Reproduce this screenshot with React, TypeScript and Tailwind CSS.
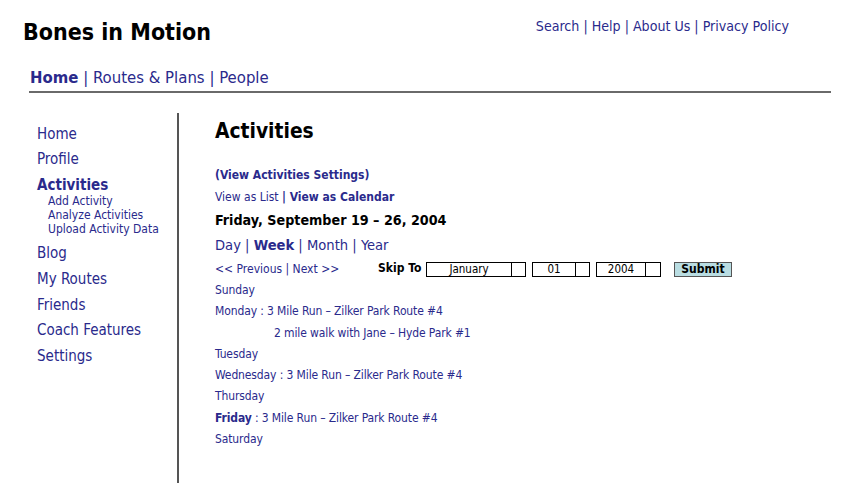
import React from "react";

const L = "text-[#2a2a8c]";

export default function App() {
  return (
    <div
      className="w-[851px] h-[483px] bg-white overflow-hidden text-black"
      style={{ fontFamily: '"DejaVu Sans Condensed", "DejaVu Sans", sans-serif' }}
    >
      {/* header */}
      <div className="flex justify-between items-start h-[62px]">
        <div className="pl-[23px] pt-[16px] text-[23px] font-bold leading-[32px]">Bones in Motion</div>
        <div className={`pr-[62px] pt-[16px] text-[14.1px] leading-[20px] ${L}`}>
          Search | Help | About Us | Privacy Policy
        </div>
      </div>
      <div className={`pl-[30px] pt-[4px] text-[16.6px] leading-[24px] h-[29px] ${L}`}>
        <span className="font-bold">Home</span> | Routes &amp; Plans | People
      </div>
      <div className="ml-[29px] mr-[20px] h-[2px] bg-[#6a6a6a]" />
      <div className="flex mt-[20px]">
        <div className="w-[179px] shrink-0 border-r-2 border-[#555] h-[370px] pl-[37px] pt-[11px]">
          <div className={`text-[15px] leading-[20px] ${L}`}>
            <div className="h-[25px]">Home</div>
            <div className="h-[26px]">Profile</div>
            <div className="font-bold h-[19px]">Activities</div>
            <div className="pl-[11px] text-[12px] leading-[14px] h-[49px]">
              <div>Add Activity</div>
              <div>Analyze Activities</div>
              <div>Upload Activity Data</div>
            </div>
            <div className="h-[26px]">Blog</div>
            <div className="h-[26px]">My Routes</div>
            <div className="h-[25px]">Friends</div>
            <div className="h-[26px]">Coach Features</div>
            <div className="h-[26px]">Settings</div>
          </div>
        </div>
        <div className="pl-[36px] pt-[4px]">
          <div className="text-[20.8px] font-bold leading-[28px] h-[49px]">Activities</div>
          <div className={`text-[12px] leading-[18px] ${L}`}>
            <div className="font-bold h-[22px]">(View Activities Settings)</div>
            <div className="h-[21px]">
              View as List <span className="font-bold">| View as Calendar</span>
            </div>
          </div>
          <div className="text-[14.2px] font-bold leading-[22px] h-[25px]">Friday, September 19 – 26, 2004</div>
          <div className={`text-[14.6px] leading-[22px] h-[24px] ${L}`}>
            Day | <span className="font-bold">Week</span> | Month | Year
          </div>
          <div className={`flex items-center text-[12px] h-[22px] ${L}`}>
            <div className="w-[163px]">&lt;&lt; Previous | Next &gt;&gt;</div>
            <div className="w-[48px] font-bold text-black mb-[2px]">Skip To</div>
            <div className="flex h-[15px] border border-black text-black text-[11.5px] leading-[13px]">
              <div className="w-[85px] text-center border-r border-black">January</div>
              <div className="w-[13px]" />
            </div>
            <div className="flex h-[15px] ml-[6px] border border-black text-black text-[11.5px] leading-[13px]">
              <div className="w-[43px] text-center border-r border-black">01</div>
              <div className="w-[13px]" />
            </div>
            <div className="flex h-[15px] ml-[6px] border border-black text-black text-[11.5px] leading-[13px]">
              <div className="w-[49px] text-center border-r border-black">2004</div>
              <div className="w-[14px]" />
            </div>
            <div className="ml-[13px] w-[58px] h-[15px] bg-[#b9dde2] border border-[#555] text-black font-bold text-[12px] leading-[13px] text-center">
              Submit
            </div>
          </div>
          <div className={`text-[12px] leading-[21.3px] tracking-[-0.12px] ${L}`}>
            <div>Sunday</div>
            <div>Monday : 3 Mile Run – Zilker Park Route #4</div>
            <div className="pl-[59px]">2 mile walk with Jane – Hyde Park #1</div>
            <div>Tuesday</div>
            <div>Wednesday : 3 Mile Run – Zilker Park Route #4</div>
            <div>Thursday</div>
            <div>
              <span className="font-bold">Friday</span> : 3 Mile Run – Zilker Park Route #4
            </div>
            <div>Saturday</div>
          </div>
        </div>
      </div>
    </div>
  );
}
